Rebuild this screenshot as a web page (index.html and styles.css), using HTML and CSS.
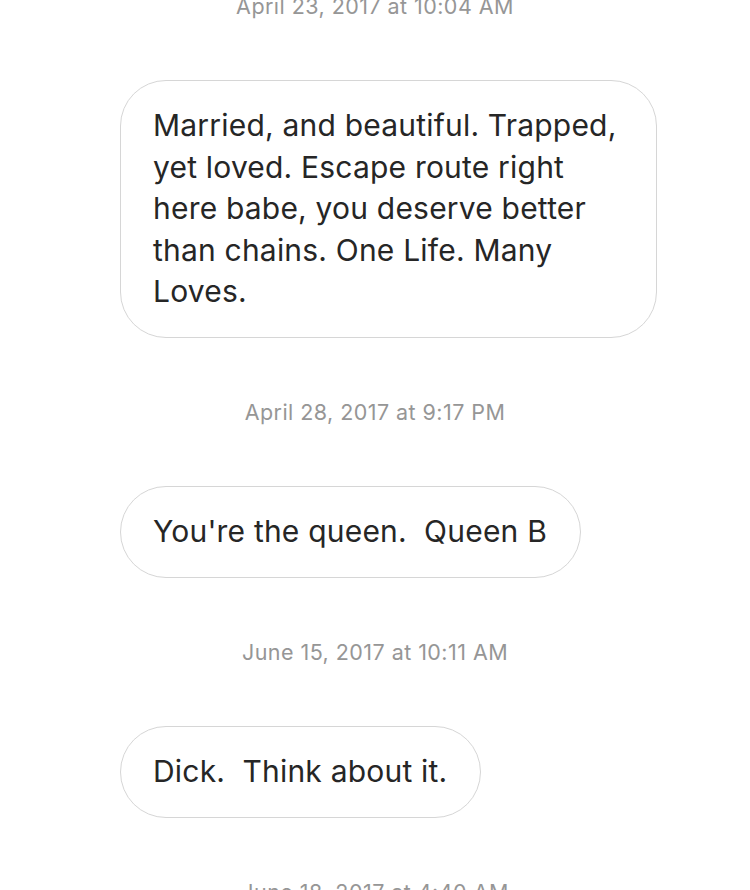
FILE: index.html
```html
<!DOCTYPE html>
<html lang="en">
<head>
  <meta charset="UTF-8" />
  <meta name="viewport" content="width=device-width, initial-scale=1.0" />
  <title>Messages</title>
  <link rel="stylesheet" href="styles.css">
</head>
<body>
  <div class="thread">
    <div class="stamp">April 23, 2017 at 10:04 AM</div>
    <div class="bubble wide">Married, and beautiful. Trapped, yet loved. Escape route right here babe, you deserve better than chains. One Life. Many Loves.</div>

    <div class="stamp">April 28, 2017 at 9:17 PM</div>
    <div class="bubble">You're the queen.&nbsp; Queen B</div>

    <div class="stamp">June 15, 2017 at 10:11 AM</div>
    <div class="bubble">Dick.&nbsp; Think about it.</div>

    <div class="stamp">June 18, 2017 at 4:40 AM</div>
  </div>
</body>
</html>
```

FILE: styles.css
```css
body {
  margin: 0;
  background: #fff;
  font-family: Inter, "Noto Sans", sans-serif;
  overflow: hidden;
}
.thread {
  display: flex;
  flex-direction: column;
  gap: 62.25px;
  margin-top: -6px;
  padding-left: 120px;
}
.stamp {
  margin-left: -120px;
  width: 750px;
  text-align: center;
  font-size: 21.5px;
  letter-spacing: 0.45px;
  line-height: 24px;
  color: #969696;
}
.bubble {
  align-self: flex-start;
  box-sizing: border-box;
  border: 1px solid #d6d6d6;
  border-radius: 46px;
  padding: 24px 33px 24px 32px;
  font-size: 30px;
  letter-spacing: 0.2px;
  line-height: 41.5px;
  color: #262626;
}
.bubble.wide {
  width: 537px;
}
```
